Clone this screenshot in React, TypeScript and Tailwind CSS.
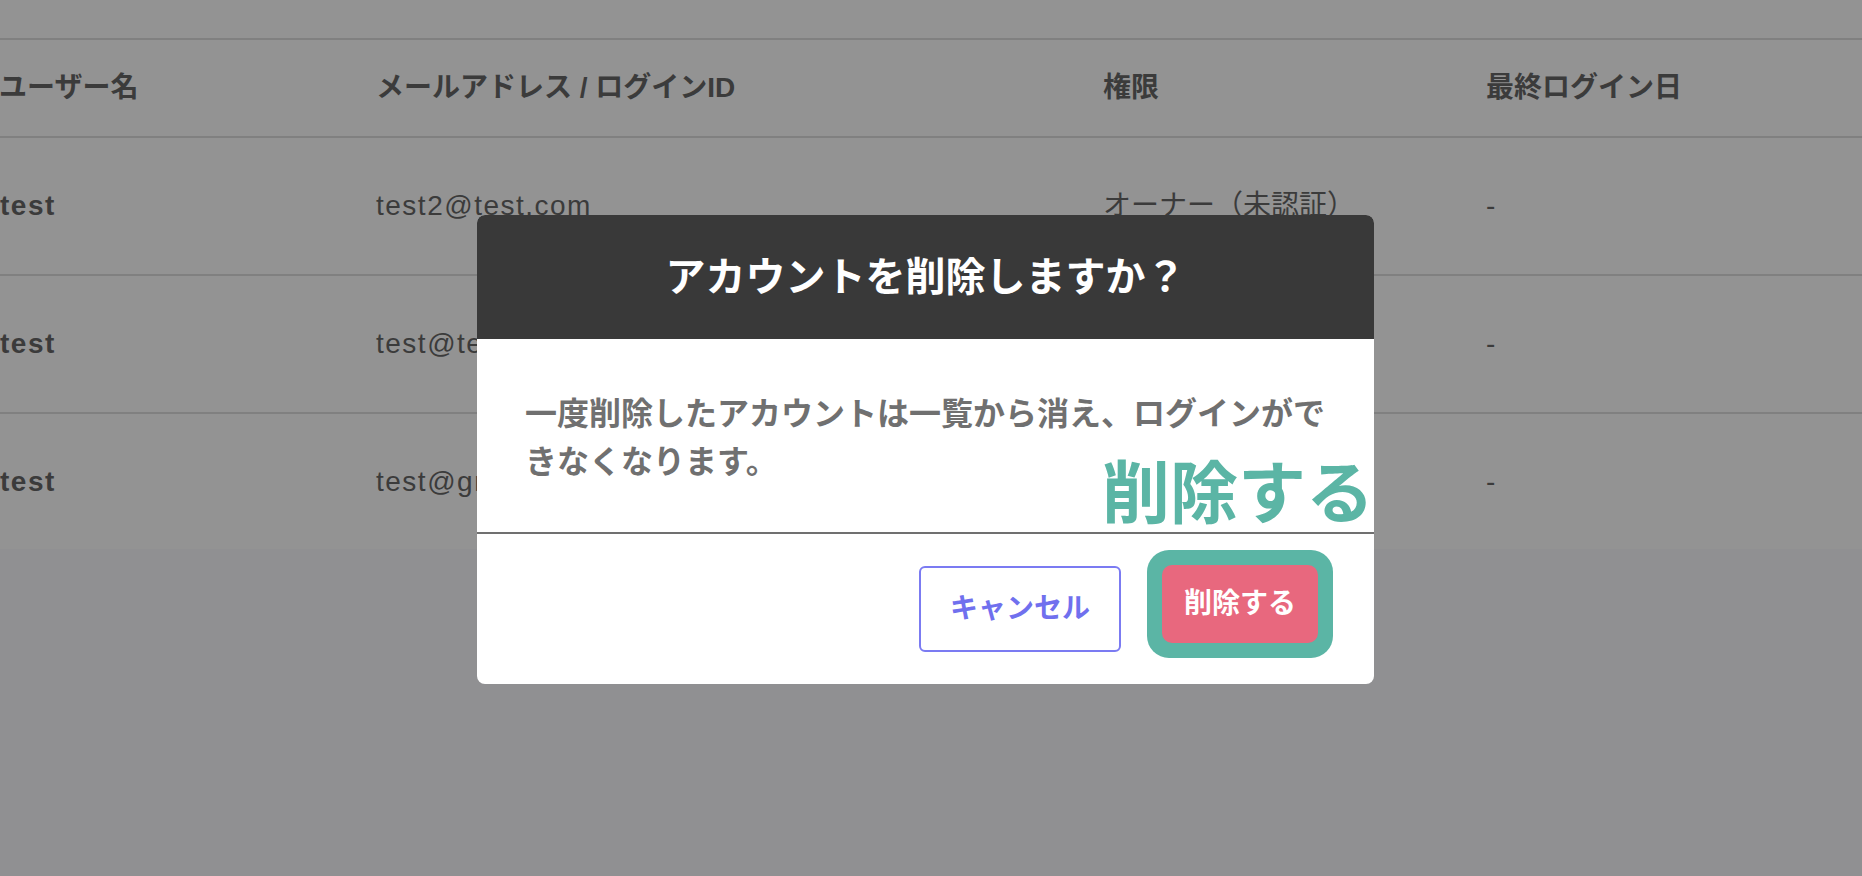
import * as React from "react";

const rows = [
  { name: "test", email: "test2@test.com", role: "オーナー（未認証）", last: "-" },
  { name: "test", email: "test@test.com", role: "オーナー", last: "-" },
  { name: "test", email: "test@gmail.com", role: "オーナー", last: "-" },
];

export default function App() {
  return (
    <div
      className="relative w-[1862px] h-[876px] overflow-hidden bg-[#909092] text-[#3b3b3b]"
      style={{ fontFamily: '"Liberation Sans", "Noto Sans CJK JP", sans-serif' }}
    >
      {/* Account table (dimmed behind the dialog) */}
      <div className="bg-[#939393]">
        <div className="h-[38px]" />
        <div className="border-t-2 border-[#808080]">
          <div className="grid grid-cols-[376px_727px_383px_1fr] h-[98px] items-center border-b-2 border-[#808080] text-[28px] font-bold">
            <div className="-ml-[1px]">ユーザー名</div>
            <div>メールアドレス / ログインID</div>
            <div>権限</div>
            <div>最終ログイン日</div>
          </div>
          {rows.map((r, i) => (
            <div
              key={i}
              className={
                i < rows.length - 1
                  ? "grid grid-cols-[376px_727px_383px_1fr] h-[138px] items-center border-b-2 border-[#808080] text-[28px]"
                  : "grid grid-cols-[376px_727px_383px_1fr] h-[135px] items-center text-[28px]"
              }
            >
              <div className="font-bold tracking-[1.5px]">{r.name}</div>
              <div className="tracking-[1.5px]">{r.email}</div>
              <div>{r.role}</div>
              <div>{r.last}</div>
            </div>
          ))}
        </div>
      </div>

      {/* Delete confirmation dialog */}
      <div className="absolute left-[477px] top-[215px] w-[897px] rounded-lg bg-white overflow-hidden">
        <div className="h-[124px] bg-[#393939] flex items-center justify-center">
          <h2 className="text-[40px] font-bold text-white leading-none">アカウントを削除しますか？</h2>
        </div>

        <div className="relative px-[48px] pt-[51px] pb-[46px]">
          <p className="text-[32px] leading-[48px] font-bold text-[#707070]">
            一度削除したアカウントは一覧から消え、ログインができなくなります。
          </p>
          <span className="absolute right-0 bottom-[4px] text-[68px] leading-none font-bold text-[#5bb5a5]">
            削除する
          </span>
        </div>

        <div className="h-[2px] bg-[#707070]" />

        <div className="flex justify-end items-start gap-[26px] pr-[41px] py-[32px]">
          <button className="w-[202px] h-[86px] border-2 border-[#7b7bf2] rounded-md text-[28px] font-bold text-[#7070ee]">
            キャンセル
          </button>
          <div className="-mt-[16px] -mb-[6px] rounded-[22px] bg-[#5bb5a5] p-[15px]">
            <button className="w-[156px] h-[78px] rounded-[10px] bg-[#e8687e] text-[28px] font-bold text-white">
              削除する
            </button>
          </div>
        </div>
      </div>
    </div>
  );
}
